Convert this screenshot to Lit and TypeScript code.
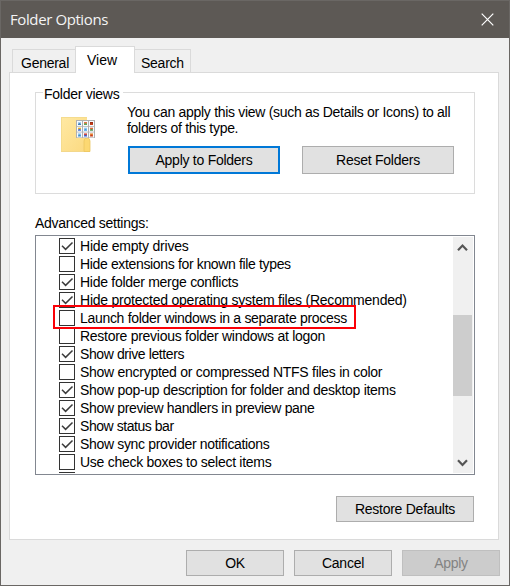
import { LitElement, html, css, svg } from "lit";
import { customElement } from "lit/decorators.js";
import { classMap } from "lit/directives/class-map.js";
import { styleMap } from "lit/directives/style-map.js";

// "track" is the letter spacing of a label, in pixels.
const settings = [
  { label: "Hide empty drives", on: true, track: -0.2 },
  { label: "Hide extensions for known file types", on: false, track: -0.35 },
  { label: "Hide folder merge conflicts", on: true, track: -0.28 },
  { label: "Hide protected operating system files (Recommended)", on: true, track: -0.23 },
  { label: "Launch folder windows in a separate process", on: false, track: -0.31 },
  { label: "Restore previous folder windows at logon", on: false, track: -0.275 },
  { label: "Show drive letters", on: true, track: -0.4 },
  { label: "Show encrypted or compressed NTFS files in color", on: false, track: -0.27 },
  { label: "Show pop-up description for folder and desktop items", on: true, track: -0.29 },
  { label: "Show preview handlers in preview pane", on: true, track: -0.33 },
  { label: "Show status bar", on: true, track: -0.45 },
  { label: "Show sync provider notifications", on: true, track: -0.33 },
  { label: "Use check boxes to select items", on: false, track: -0.275 },
  { label: "", on: false, track: 0 },
];

const thumbColors = [
  ["#3f7fb9", "#5fa85b", "#c8401c"],
  ["#4a6fd0", "#3f9be0", "#4f9850"],
  ["#3f8fc9", "#3558c8", "#c8401c"],
];
const thumbAccents = [
  ["#a9d0f0", "#e2744a", "#a02a10"],
  ["#e8b030", "#98c8f0", "#e06a3a"],
  ["#8fc3ec", "#d84a3a", "#e8873a"],
];

@customElement("app-root")
export class AppRoot extends LitElement {
  static styles = css`
    :host {
      display: block;
      font-family: "Liberation Sans", Arial, sans-serif;
      font-size: 14px;
      letter-spacing: -0.26px;
      line-height: 16px;
      color: #000;
    }
    * { box-sizing: border-box; }
    .window {
      width: 510px;
      height: 586px;
      border: 1px solid #6a6764;
      background: #f0f0f0;
      display: flex;
      flex-direction: column;
      overflow: hidden;
      white-space: nowrap;
    }
    .title {
      height: 37px;
      flex: none;
      background: #5d5955;
      color: #f4f4f4;
      display: flex;
      align-items: center;
      justify-content: space-between;
      padding: 0 15px 0 9px;
      font: 15px/20px "Open Sans", "Noto Sans", sans-serif;
      letter-spacing: -0.4px;
    }
    .title span { margin-top: -1px; }
    .title svg { display: block; }
    .tabs {
      height: 35px;
      flex: none;
      display: flex;
      align-items: flex-end;
      padding: 0 0 0 11px;
      margin-bottom: -1px;
      z-index: 1;
    }
    .tab {
      height: 24px;
      border: 1px solid #dadada;
      border-right: 0;
      padding: 5px 0 0 8px;
    }
    .general { width: 63px; }
    .view {
      width: 60px;
      height: 27px;
      border-right: 1px solid #dadada;
      border-bottom: 0;
      background: #fff;
      padding-left: 11px;
      letter-spacing: 0;
    }
    .search {
      width: 56px;
      border-left: 0;
      border-right: 1px solid #dadada;
      padding-left: 6px;
    }
    .panel {
      width: 490px;
      height: 468px;
      flex: none;
      margin-left: 8px;
      border: 1px solid #dadada;
      background: #fff;
      padding: 11px 23px 0 25px;
      display: flex;
      flex-direction: column;
    }
    .group {
      height: 110px;
      width: 440px;
      display: grid;
      grid-template-columns: 440px;
      grid-template-rows: 19px 91px;
    }
    .legend {
      display: flex;
      align-items: center;
    }
    .legend::before, .legend::after {
      content: "";
      height: 10px;
      border-top: 1px solid #dcdcdc;
      align-self: flex-end;
    }
    .legend::before { width: 7px; border-left: 1px solid #dcdcdc; }
    .legend::after { flex: 1; border-right: 1px solid #dcdcdc; }
    .legend span { width: 80px; padding-left: 1px; }
    .group-body {
      border: 1px solid #dcdcdc;
      border-top: 0;
      display: flex;
      padding: 0 20px 0 25px;
    }
    .folder { display: block; margin-top: 12px; flex: none; }
    .actions { margin-left: 31px; }
    .desc {
      height: 43px;
      margin-left: -1px;
      padding-top: 1px;
      letter-spacing: -0.3px;
    }
    .row { display: flex; gap: 22px; }
    .btn {
      height: 26px;
      border: 1px solid #adadad;
      background: #e1e1e1;
      display: flex;
      align-items: center;
      justify-content: center;
    }
    .row .btn { width: 152px; height: 28px; flex: none; }
    .row .default { border: 2px solid #0078d7; }
    .caption { margin-top: 21px; height: 20px; }
    .list {
      width: 440px;
      height: 240px;
      flex: none;
      border: 1px solid #828790;
      padding: 1px;
      display: flex;
      justify-content: space-between;
      position: relative;
    }
    .items {
      height: 236px;
      overflow: hidden;
      padding: 1px 0 0 22px;
    }
    .item { height: 18px; display: flex; gap: 5px; }
    .box {
      width: 16px;
      height: 16px;
      border: 1px solid #333;
      background: #fff;
      flex: none;
    }
    .box svg { display: block; }
    .mark {
      position: absolute;
      left: 17px;
      top: 69px;
      width: 303px;
      height: 24px;
      border: 2px solid #fb0007;
    }
    .scroll {
      width: 20px;
      background: #f0f0f0;
      display: flex;
      flex-direction: column;
    }
    .scroll svg { display: block; flex: none; }
    .track { flex: 1; padding-top: 58px; }
    .thumb { width: 19px; height: 81px; background: #cdcdcd; }
    .restore { width: 138px; align-self: flex-end; margin: 21px 1px 0 0; }
    .footer {
      display: flex;
      justify-content: flex-end;
      gap: 10px;
      padding: 10px 9px 0 0;
    }
    .footer .btn { width: 98px; }
    .footer .disabled { background: #ccc; border-color: #bfbfbf; color: #838383; }
  `;

  private folder() {
    return html`<svg class="folder" width="36" height="40" viewBox="0 0 36 40">
      <defs>
        <linearGradient id="f" x1="0" y1="0" x2="1" y2="1">
          <stop offset="0" stop-color="#ffe9a3" />
          <stop offset="1" stop-color="#fbd980" />
        </linearGradient>
      </defs>
      <path d="M0 2h26v35H0z" fill="url(#f)" />
      <path d="M.5 2v35M0 2.5h26" stroke="#f5dc8e" fill="none" />
      <path d="M0 36.5h29" stroke="#f3d88c" />
      <path d="M23 36.5V26q0-3 3-3t3 3v10.5z" fill="#fcd872" stroke="#ecc75f" stroke-width=".8" />
      <path d="M15 5h19v18H15z" fill="#b0b0b0" />
      ${thumbColors.map((r, y) =>
        r.map(
          (c, x) => svg`<g transform="translate(${16 + x * 6} ${6 + y * 5.7})">
            <path d="M0 0h5v5H0z" fill="#f7fbff" />
            <path d="M1 1h3v2H1z" fill=${thumbAccents[y][x]} />
            <path d="M1 3l1.5-1L4 3v1H1z" fill=${c} />
          </g>`
        )
      )}
    </svg>`;
  }

  private arrow(d: string) {
    return html`<svg width="20" height="20" viewBox="0 0 20 20">
      <path d=${d} fill="none" stroke="#555" stroke-width="2.2" />
    </svg>`;
  }

  render() {
    return html`<div class="window">
      <div class="title">
        <span>Folder Options</span>
        <svg width="13" height="13" viewBox="0 0 13 13">
          <path d="M.7.7l11.6 11.6M12.3.7L.7 12.3" stroke="#fff" stroke-width="1.2" />
        </svg>
      </div>
      <div class="tabs">
        <div class="tab general">General</div>
        <div class="tab view">View</div>
        <div class="tab search">Search</div>
      </div>
      <div class="panel">
        <div class="group">
          <div class="legend"><span>Folder views</span></div>
          <div class="group-body">
            ${this.folder()}
            <div class="actions">
              <div class="desc">
                You can apply this view (such as Details or Icons) to all<br />folders of this type.
              </div>
              <div class="row">
                <div class="btn default">Apply to Folders</div>
                <div class="btn">Reset Folders</div>
              </div>
            </div>
          </div>
        </div>
        <div class="caption">Advanced settings:</div>
        <div class="list">
          <div class="items">
            ${settings.map(
              (s) => html`<div class="item">
                <span class=${classMap({ box: true, on: s.on })}>
                  ${s.on
                    ? html`<svg width="14" height="14" viewBox="0 0 14 14">
                        <path d="M2 6.8l3.6 3.6L12.5 3.5" fill="none" stroke="#3c3c3c" stroke-width="1.5" />
                      </svg>`
                    : ""}
                </span>
                <span style=${styleMap({ letterSpacing: `${s.track}px` })}>${s.label}</span>
              </div>`
            )}
          </div>
          <div class="scroll">
            ${this.arrow("M5 13.2l4.5-4.7L14 13.2")}
            <div class="track"><div class="thumb"></div></div>
            ${this.arrow("M5 7.2l4.5 4.7L14 7.2")}
          </div>
          <div class="mark"></div>
        </div>
        <div class="btn restore">Restore Defaults</div>
      </div>
      <div class="footer">
        <div class="btn">OK</div>
        <div class="btn">Cancel</div>
        <div class="btn disabled">Apply</div>
      </div>
    </div>`;
  }
}
